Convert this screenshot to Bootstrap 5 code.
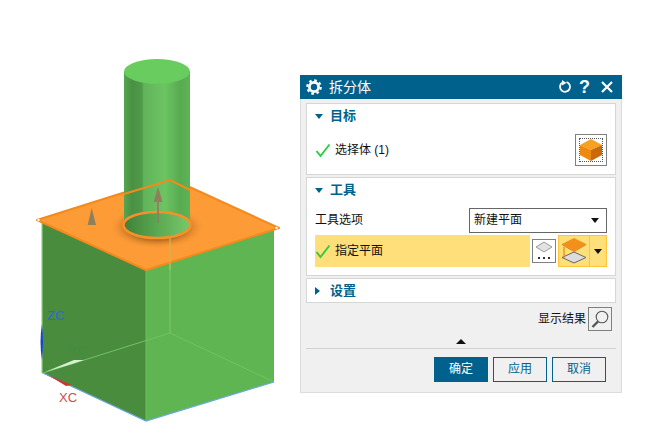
<!DOCTYPE html>
<html lang="zh">
<head>
<meta charset="utf-8">
<title>拆分体</title>
<link href="https://cdn.jsdelivr.net/npm/bootstrap@5.3.0/dist/css/bootstrap.min.css" rel="stylesheet">
<style>
html,body{height:442px;overflow:hidden;background:#fff}
body{font-family:"Liberation Sans","Noto Sans CJK SC",sans-serif;font-size:12px;color:#111;line-height:1.2}
.scene{width:300px;height:442px;flex:none;display:block}
.scene text{font-family:"Liberation Sans",sans-serif;font-size:13px}
.dlg{width:322px;height:318px;margin-top:75px;background:#f0f0f0;border:1px solid #dcdcdc;border-top:0}
.dlg-head{height:24px;background:#00628c;color:#fff;font-size:14px;margin:0 -1px;padding:0 9px 0 6px}
.dlg-name{margin-left:7px}
.dlg-q{font:bold 18px "Liberation Sans",sans-serif;width:17px;text-align:center}
.dlg-body{padding:4px 5px 0}
.pane{background:#fff;border:1px solid #d6d6d6;margin-bottom:2px;padding:0 8px 8px}
.pane-end{padding-bottom:0;margin-bottom:0}
.pane-hd{height:24px;color:#00628c;font-size:13px;font-weight:700}
.pane-hd-end{height:23px}
.caret-box{width:15px;flex:none}
.sel-icon{width:32px;height:32px;border:1px solid #808080;background:#fff;padding:3px}
.sel-dots{width:100%;height:100%;border:1px dotted #555}
.row-a{margin-top:6px;height:32px}
.tool-sel{margin-top:6px;height:25px}
.tool-input{width:138px;height:25px;border:1px solid #666;border-radius:0;font-size:12px;padding:0 20px 0 4px;color:#111;line-height:23px;font-family:inherit;
 background-image:url("data:image/svg+xml,%3Csvg xmlns='http://www.w3.org/2000/svg' width='10' height='6'%3E%3Cpath d='M1 0h8L5 5z' fill='%23111'/%3E%3C/svg%3E");background-position:right 6px center;background-size:10px 6px}
.plane-row{margin-top:2px;height:32px}
.plane-lab{width:215px;background:#ffdf7a;height:32px}
.plane-sm{width:24px;height:24px;border:1px solid #808080;background:#fff;margin:0 2px}
.plane-big{width:49px;height:32px;background:#ffdf7a;border:1px solid #ffc43a}
.plane-main{width:31px;border-right:1px solid #ffc43a;height:30px}
.res-row{margin-top:4px;height:24px;padding-right:4px}
.mag{width:24px;height:24px;border:1px solid #808080;margin-left:2px}
.fold{height:17px;padding-top:8px}
.sep{margin:0;height:0;border:0;border-top:1px solid #d2d2d2;opacity:1}
.act-row{margin-top:8px;padding-right:10px}
.act-gap{gap:5px}
.act-btn{width:54px;height:25px;padding:0;border-radius:0;font-size:12px;border:1px solid #00628c;color:#00628c;background:transparent;line-height:23px}
.act-pri{background:#00628c;color:#fff}
</style>
</head>
<body>
<div class="d-flex">
<svg class="scene" viewBox="0 0 300 442" xmlns="http://www.w3.org/2000/svg">
 <defs>
  <linearGradient id="cyl" x1="0" x2="1" y1="0" y2="0">
   <stop offset="0" stop-color="#55a64f"/><stop offset=".12" stop-color="#4a9044"/><stop offset=".27" stop-color="#4f9a49"/><stop offset=".3" stop-color="#62b35a"/><stop offset=".62" stop-color="#6cc463"/><stop offset=".85" stop-color="#58ab50"/><stop offset="1" stop-color="#5fb357"/>
  </linearGradient>
  <linearGradient id="holeg" x1="0" x2="1" y1="0" y2="0">
   <stop offset="0" stop-color="#3f8038"/><stop offset=".5" stop-color="#5aa851"/><stop offset="1" stop-color="#78c86c"/>
  </linearGradient>
  <radialGradient id="shade" cx=".5" cy=".5" r=".5">
   <stop offset=".6" stop-color="#a8621c" stop-opacity=".8"/><stop offset="1" stop-color="#fd9b36" stop-opacity="0"/>
  </radialGradient>
 </defs>
 <polygon points="42,222 146,268 146,421 42,373" fill="#4a8c3e"/>
 <polygon points="146,268 274,228 274,382 146,421" fill="#5fb552"/>
 <path d="M170 333 43 373M170 333 274 382" stroke="#72c263" stroke-width="1" fill="none"/>
 <path d="M170 240V333" stroke="#7fc56c" stroke-width="1" fill="none"/>
 <path d="M42 222V373" stroke="#8fd681" stroke-width="1.200" fill="none"/>
 <path d="M146 270V421" stroke="#6fbe60" stroke-width="1" fill="none"/>
 <path d="M43 373 146 421 274 382" stroke="#6aa9e0" stroke-width="1.200" fill="none"/>
 <polygon points="37,220 170,178 279,228 146,270" fill="#fd9b36" stroke="#f5891c" stroke-width="2" stroke-linejoin="round"/>
 <ellipse cx="157" cy="227" rx="48" ry="22" fill="url(#shade)"/>
 <path d="M124 72V225H190V72Z" fill="url(#cyl)"/>
 <circle cx="38.500" cy="220" r="1.200" fill="#fff"/>
 <circle cx="276.500" cy="228" r="1.200" fill="#fff"/>
 <ellipse cx="157" cy="71.500" rx="33" ry="12.500" fill="#68cc5e"/>
 <path d="M124 194 170 180 190 190" stroke="#f5891c" stroke-width="2" fill="none"/>
 <ellipse cx="157" cy="225" rx="33.500" ry="13" fill="url(#holeg)" stroke="#f5902a" stroke-width="2.600"/>
 <path d="M170 238V270" stroke="#c8bd50" stroke-width="1" fill="none"/>
 <path d="M158 200V223" stroke="#8f7f5c" stroke-width="1.800"/>
 <polygon points="158,187 162.500,202 153.500,202" fill="#8f7f5c"/>
 <polygon points="91.700,208 96,225 87.700,225" fill="#8f7f5c"/>
 <path d="M42 324Q39 342 42 360Q44 342 42 324Z" fill="#1447c4"/>
 <path d="M45 372 74 360 84 360 72 364Z" fill="#d9f0d0"/>
 <path d="M48 375 72 385 66 386Z" fill="#c43a33"/>
 <text x="47" y="320" fill="#2f62ee">ZC</text>
 <text x="69" y="355" fill="#3f8c42">YC</text>
 <text x="59" y="402" fill="#c8504c">XC</text>
</svg>

<div class="dlg">
 <div class="dlg-head d-flex align-items-center">
  <svg width="16" height="16" viewBox="0 0 16 16"><circle cx="8" cy="8" r="4.600" fill="none" stroke="#fff" stroke-width="2.800"/><circle cx="8" cy="8" r="6.700" fill="none" stroke="#fff" stroke-width="2.200" stroke-dasharray="2.630 2.630"/></svg>
  <span class="dlg-name">拆分体</span>
  <svg class="ms-auto" width="14" height="14" viewBox="0 0 14 14"><path d="M4 2.800A5 5 0 1 0 8.500 2" fill="none" stroke="#fff" stroke-width="1.800"/><path d="M5 0V5.500L9.500 3Z" fill="#fff" transform="translate(-1 0)"/></svg>
  <span class="dlg-q ms-1">?</span>
  <svg class="ms-2" width="12" height="12" viewBox="0 0 12 12"><path d="M1 1 11 11M11 1 1 11" stroke="#fff" stroke-width="2.200"/></svg>
 </div>
 <div class="dlg-body">
  <div class="pane">
   <div class="pane-hd d-flex align-items-center"><span class="caret-box"><svg class="d-block" width="8" height="5" viewBox="0 0 8 5"><path d="M0 0H8L4 5Z" fill="#00628c"/></svg></span>目标</div>
   <div class="row-a d-flex align-items-center">
    <svg width="16" height="15" viewBox="0 0 16 15"><path d="M1.500 8 5.500 13 14.500 1.500" fill="none" stroke="#33cc44" stroke-width="2"/></svg>
    <span class="ms-1">选择体 (1)</span>
    <div class="sel-icon ms-auto"><div class="sel-dots d-flex align-items-center justify-content-center">
     <svg width="22" height="22" viewBox="0 0 22 22"><polygon points="11,0 22,6 11,11 0,6" fill="#f7a021"/><polygon points="0,6 11,11 11,22 0,16" fill="#ee8a0f"/><polygon points="22,6 11,11 11,22 22,16" fill="#cc680c"/></svg>
    </div></div>
   </div>
  </div>
  <div class="pane">
   <div class="pane-hd d-flex align-items-center"><span class="caret-box"><svg class="d-block" width="8" height="5" viewBox="0 0 8 5"><path d="M0 0H8L4 5Z" fill="#00628c"/></svg></span>工具</div>
   <div class="tool-sel d-flex align-items-center justify-content-between">
    <span>工具选项</span>
    <select class="form-select tool-input" aria-label="工具选项"><option>新建平面</option></select>
   </div>
   <div class="plane-row d-flex align-items-center">
    <div class="plane-lab d-flex align-items-center">
     <svg width="16" height="15" viewBox="0 0 16 15"><path d="M1.500 8 5.500 13 14.500 1.500" fill="none" stroke="#33cc44" stroke-width="2"/></svg>
     <span class="ms-1">指定平面</span>
    </div>
    <div class="plane-sm d-flex align-items-center justify-content-center">
     <svg width="20" height="20" viewBox="0 0 20 20"><polygon points="10,1 18,6 10,11 2,6" fill="#e2e2e2" stroke="#9a9a9a"/><path d="M4 16h2v2H4zM9 16h2v2H9zM14 16h2v2h-2z" fill="#333"/></svg>
    </div>
    <div class="plane-big d-flex align-items-center">
     <div class="plane-main d-flex align-items-center justify-content-center">
      <svg width="26" height="26" viewBox="0 0 26 26"><polygon points="13,14 25,19.500 13,25 1,19.500" fill="#dcdcdc" stroke="#666"/><path d="M3 9V20" stroke="#e8801a" stroke-width="1.200"/><polygon points="13,0 25,6 13,13 1,6" fill="#f2901a"/><polygon points="1,6 13,13 25,6 25,7 13,14 1,7" fill="#d9740e"/></svg>
     </div>
     <div class="flex-grow-1 d-flex justify-content-center"><svg width="8" height="5" viewBox="0 0 8 5"><path d="M0 0H8L4 5Z" fill="#111"/></svg></div>
    </div>
   </div>
  </div>
  <div class="pane pane-end">
   <div class="pane-hd pane-hd-end d-flex align-items-center"><span class="caret-box"><svg class="d-block" width="5" height="8" viewBox="0 0 5 8"><path d="M0 0V8L5 4Z" fill="#00628c"/></svg></span>设置</div>
  </div>
  <div class="res-row d-flex align-items-center justify-content-end">
   <span>显示结果</span>
   <div class="mag d-flex align-items-center justify-content-center"><svg width="20" height="20" viewBox="0 0 20 20"><circle cx="12" cy="8" r="5.800" fill="none" stroke="#555" stroke-width="1.100"/><path d="M8 12.500 2.500 18" stroke="#555" stroke-width="2.400"/></svg></div>
  </div>
  <div class="fold d-flex justify-content-center"><svg width="10" height="5" viewBox="0 0 10 5"><path d="M5 0 10 5H0Z" fill="#111"/></svg></div>
  <hr class="sep">
  <div class="act-row d-flex justify-content-end act-gap">
   <button type="button" class="btn act-btn act-pri">确定</button>
   <button type="button" class="btn act-btn">应用</button>
   <button type="button" class="btn act-btn">取消</button>
  </div>
 </div>
</div>
</div>
<script src="https://cdn.jsdelivr.net/npm/bootstrap@5.3.0/dist/js/bootstrap.bundle.min.js"></script>
</body>
</html>
